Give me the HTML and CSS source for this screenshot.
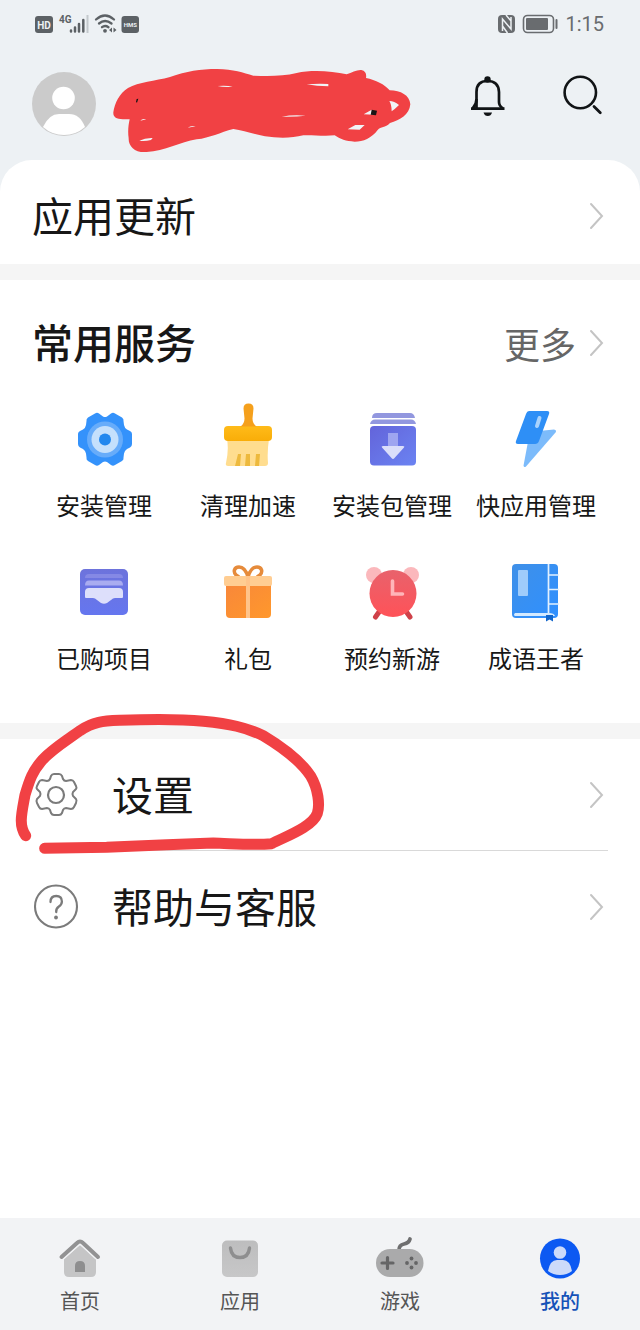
FILE: index.html
```html
<!DOCTYPE html>
<html lang="zh-CN">
<head>
<meta charset="utf-8">
<meta name="viewport" content="width=device-width, initial-scale=1">
<title>我的</title>
<link rel="stylesheet" href="styles.css">
</head>
<body>
<header class="top">
  <div class="status">
    <svg class="status-left" width="110" height="24" viewBox="32 12 110 24" aria-hidden="true">
      <rect x="35" y="16" width="18" height="17" rx="3" fill="#5c6165"/>
      <text x="44" y="28.500" text-anchor="middle" class="t-hd">HD</text>
      <text x="59" y="23" class="t-4g">4G</text>
      <path d="M71 30.500v1M75 27.500v4M79 24v7.500M83.300 20v11.500" stroke="#5c6165" stroke-width="2.500" stroke-linecap="round"/>
      <path d="M87.500 15v18" stroke="#c3c8cc" stroke-width="2"/>
      <g fill="none" stroke="#5c6165" stroke-width="2.300" stroke-linecap="round"><path d="M96 19.500q9-8 18 0M99 23.500q6-5 12.500 0M102 27.200q3-2.500 6.500 0"/></g>
      <circle cx="105" cy="30.800" r="1.900" fill="#5c6165"/>
      <path d="M112 27.500v5l-3-2.500zM113.500 27.500v5l3-2.500z" fill="#5c6165"/>
      <rect x="121.500" y="16" width="17.500" height="17" rx="3" fill="#5c6165"/>
      <text x="130.300" y="26.500" text-anchor="middle" class="t-hms">HMS</text>
    </svg>
    <div class="status-right">
      <svg width="64" height="24" viewBox="496 12 64 24" aria-hidden="true">
        <rect x="499" y="15" width="17" height="18" rx="4" fill="#696c6f"/>
        <path d="M503.500 31V19l8.500 10V17M507 15l5 6M503.500 26l5 7" fill="none" stroke="#edf1f4" stroke-width="1.500"/>
        <rect x="524.500" y="15.500" width="30" height="17" rx="4" fill="none" stroke="#696c6f" stroke-width="1.600"/>
        <rect x="527" y="18" width="22" height="12" rx="1" fill="#696c6f"/>
        <path d="M557.500 20v8" stroke="#696c6f" stroke-width="2" stroke-linecap="round"/>
      </svg>
      <time class="clock">1:15</time>
    </div>
  </div>
  <div class="profile">
    <button class="plain" aria-label="头像">
      <svg width="64" height="64" viewBox="0 0 64 64"><circle cx="32" cy="32" r="32" fill="#cbcbcb"/><circle cx="31.500" cy="26" r="11.300" fill="#fff"/><path d="M11 55Q17 42 27 42h10q11 0 16 13Q44 63 32 63T11 55z" fill="#fff"/></svg>
    </button>
    <div class="actions">
      <button class="plain" aria-label="通知">
        <svg width="48" height="48" viewBox="464 80 48 48"><path d="M476.500 108V92q0-11 11-11t11.500 11v10q0 4 4 6.500" fill="none" stroke="#111416" stroke-width="2.700"/><path d="M471 108.700h33.500M476.500 99q0 5-3.500 9" fill="none" stroke="#111416" stroke-width="2.700"/><circle cx="487.500" cy="79.500" r="3.200" fill="#111416"/><path d="M483.500 112.500h8.500q-1 3.500-4.200 3.500t-4.300-3.500z" fill="#111416"/></svg>
      </button>
      <button class="plain" aria-label="搜索">
        <svg width="48" height="48" viewBox="558 80 48 48"><circle cx="580.300" cy="92.500" r="15.700" fill="none" stroke="#111416" stroke-width="2.600"/><path d="M594 106.500l6.300 6.300" stroke="#111416" stroke-width="2.800" stroke-linecap="round"/></svg>
      </button>
    </div>
  </div>
  <svg class="scribble" width="320" height="100" viewBox="0 0 960 300" aria-hidden="true">
    <path fill="#f14144" d="M40 157C44 130 58 100 84 84C116 66 165 63 210 51C260 34 300 27 352 27C400 28 430 38 460 47C505 49 550 49 590 39C635 29 695 33 740 43C756 37 770 29 784 30C797 33 800 42 798 54C827 60 854 73 869 91C902 92 929 105 931 133C928 165 900 180 870 189C855 205 843 198 833 210C814 235 790 245 764 245C738 244 720 237 704 226C670 230 635 224 610 226C575 235 535 235 495 229C460 222 430 212 400 207C360 217 330 234 290 238C240 247 195 273 140 276C105 279 85 259 86 235C83 215 85 196 89 178C66 178 38 181 40 157Z"/>
    <path fill="#f1f3f6" d="M353 78q25-3 45 2-25 3-45-2zM620 73q35-3 65-1v7q-35 0-65-6zM118 242q18-9 40-8l-5 6q-18 4-35 2zM121 182q6-8 18-4zM263 203q10-7 24-4zM545 170q35-7 72-3-30 4-72 3zM868 123q15 0 29 12-12 12-22 19 0-20-7-31zM743 208l23-13h28l-15 14zM791 163l24-14 7 15z"/>
    <path fill="#191415" d="M815 149l16 3-3 14-16-2zM110 117l5-1-4 12-3-2z"/>
  </svg>
</header>
<main class="content">
  <section class="updates">
    <a class="row" href="#updates"><span class="title">应用更新</span><svg class="chev" width="16" height="28" viewBox="0 0 16 28"><path d="M3 2l11 12L3 26"/></svg></a>
  </section>
  <section class="services">
    <div class="heading">
      <h2 class="title strong">常用服务</h2>
      <a class="more" href="#more">更多<svg class="chev" width="16" height="28" viewBox="0 0 16 28"><path d="M3 2l11 12L3 26"/></svg></a>
    </div>
    <div class="grid">
      <a class="item" href="#install"><svg width="60" height="60" viewBox="74 409 60 60">
        <path d="M95 413.500Q97 412 99 413.500L103 416.500Q105 417.500 107 416.500L111 413.500Q113 412 115 413.500L122 417.500Q124 419 123.500 421L124 425Q124.500 428 127 429.500L130 431Q132 432 132 434V444Q132 446.500 130 447.500L127 449Q124.500 450.500 124 453.500L123.500 457.500Q124 459.500 122 461L115 465Q113 466.500 111 465L107 462Q105 461 103 462L99 465Q97 466.500 95 465L88 461Q86 459.500 86.500 457.500L86 453.500Q85.500 450.500 83 449L80 447.500Q78 446.500 78 444V434Q78 432 80 431L83 429.500Q85.500 428 86 425L86.500 421Q86 419 88 417.500Z" fill="#3492fb"/><circle cx="105" cy="439.500" r="18" fill="#67acfa"/><circle cx="105" cy="439.500" r="13.500" fill="#c5e0fc"/><circle cx="105" cy="439.500" r="6" fill="#2287ee"/></svg><span>安装管理</span></a>
      <a class="item" href="#clean"><svg width="60" height="60" viewBox="218 409 60 60">
        <defs><linearGradient id="brush" x2="0" y2="1"><stop stop-color="#ffbb19"/><stop offset="1" stop-color="#f9ad08"/></linearGradient></defs>
        <path d="M227 439h42q-2 13-1 24 0 3-3 3h-37q-3 0-2-3 3-13 1-24z" fill="#ffdd8f"/><path d="M235 466l3-12h3l-1 12zM245 466l1-12h4v12zM255 466l1-12h4l-1 12z" fill="#edb93d"/><rect x="224" y="426" width="48" height="15" rx="4" fill="url(#brush)"/><path d="M248.500 403.500q5 0 5 5l-1 10q0 5 4 8h-16q4-3 4-8l-1-10q0-5 5-5z" fill="#f5a01c"/></svg><span>清理加速</span></a>
      <a class="item" href="#packages"><svg width="60" height="60" viewBox="362 409 60 60">
        <defs><linearGradient id="box" x2="1" y2="1"><stop stop-color="#6364da"/><stop offset="1" stop-color="#6b83f2"/></linearGradient></defs>
        <path d="M372 418q0-5 5-5h33q4 0 5 5zM370 424q1-4.500 5-4.500h36q4 0 5 4.500z" fill="#9297df"/><rect x="370" y="426" width="46" height="39.500" rx="4" fill="url(#box)"/><path d="M388 433h10v13h-10z" fill="#9ea5f0"/><path d="M383 446h20q2 0 1 1.500l-9.500 10.500q-1.500 2-3 0l-9.500-10.500q-1-1.500 1-1.500z" fill="#dadefa"/></svg><span>安装包管理</span></a>
      <a class="item" href="#quick"><svg width="60" height="60" viewBox="506 409 60 60">
        <path d="M539 431l15-1.500q3 .5 1.500 3L526 466.500q-2 1.500-2.500-1l4.500-24z" fill="#7cbbfb"/><path d="M529 411h18q3 0 2 3l-10 27q-1 3-4 3h-17q-3 0-2-3l10-27q1-3 3-3z" fill="#2e8ff6"/><path d="M539.500 418l-2.500 8" stroke="#a9d3fd" stroke-width="4" stroke-linecap="round"/></svg><span>快应用管理</span></a>
      <a class="item" href="#purchased"><svg width="60" height="60" viewBox="74 562 60 60">
        <defs><linearGradient id="tray" x2="0" y2="1"><stop stop-color="#6d73dc"/><stop offset="1" stop-color="#6576ef"/></linearGradient></defs>
        <rect x="80" y="569" width="48" height="46" rx="5" fill="url(#tray)"/><path d="M85 578q0-4 4-4h30q4 0 4 4z" fill="#8589e5"/><path d="M85 585.500q0-5 4-5h30q4 0 4 5z" fill="#a9acf0"/><path d="M85 597v-5q0-4 4-4h30q4 0 4 4v5q0 1-1 1h-7q-2 0-4 2l-4 3q-3 1.500-6 0l-4-3q-2-2-4-2h-7q-1 0-1-1z" fill="#dddffb"/></svg><span>已购项目</span></a>
      <a class="item" href="#gifts"><svg width="60" height="60" viewBox="218 562 60 60">
        <defs><linearGradient id="gift" x2="1" y2="1"><stop stop-color="#f8873a"/><stop offset="1" stop-color="#ff982c"/></linearGradient></defs>
        <path d="M248 577c-2-7-5-10-9-10-5 0-6 5-3 8l3 2M248 577c2-7 5-10 9-10 5 0 6 5 3 8l-3 2" fill="none" stroke="#e68b3b" stroke-width="3.500"/><path d="M226 583h45v31q0 4-4 4h-37q-4 0-4-4z" fill="url(#gift)"/><rect x="224" y="576" width="48" height="10" rx="2" fill="#ffcd92"/><path d="M246 576h4v42h-4z" fill="#ffc48a"/></svg><span>礼包</span></a>
      <a class="item" href="#reserve"><svg width="60" height="60" viewBox="362 562 60 60">
        <defs><linearGradient id="alarm" x2="0" y2="1"><stop stop-color="#e8626c"/><stop offset="1" stop-color="#ff5258"/></linearGradient></defs>
        <circle cx="374" cy="575" r="8" fill="#fbb8bc"/><circle cx="411" cy="575" r="8" fill="#fbb8bc"/><path d="M379 612l-3.500 5M406.500 612l3.500 5" stroke="#cf4149" stroke-width="5" stroke-linecap="round"/><circle cx="393" cy="593.500" r="23.500" fill="url(#alarm)"/><path d="M392.500 581v13h10" fill="none" stroke="#ffb5b9" stroke-width="3.600" stroke-linecap="round"/></svg><span>预约新游</span></a>
      <a class="item" href="#idioms"><svg width="60" height="60" viewBox="506 562 60 60">
        <defs><linearGradient id="book" x2="1" y2="1"><stop stop-color="#3f90e8"/><stop offset="1" stop-color="#2f90ff"/></linearGradient></defs>
        <rect x="512" y="564" width="46" height="54" rx="4" fill="url(#book)"/><path d="M548.500 564v50M549 575h10M549 589.500h10M549 604h10" stroke="#e2f1ff" stroke-width="1.700"/><rect x="518" y="570" width="10" height="26" rx="1" fill="#9fccfb"/><path d="M515 613h34q5 0 6 3h-40q-2-1 0-3z" fill="#d4eaff"/><path d="M546 615h7v6.500l-3.500-2-3.500 2z" fill="#1266cb"/></svg><span>成语王者</span></a>
    </div>
  </section>
  <section class="menu">
    <a class="row" href="#settings">
      <svg class="lead" width="48" height="48" viewBox="32 771 48 48"><path d="M51 776q1-2 3-2h5q2 0 3 2l1 3q1 2 3 2l5-1q2 0 3 2l2 4q1 2 0 3l-3 3q-1 2 0 4l3 3q1 1 0 4l-2 4q-1 2-3 2l-5-1q-2 0-3 2l-1 3q-1 2-3 2h-5q-2 0-3-2l-1-3q-1-2-3-2l-5 1q-2 0-3-2l-2-4q-1-2 0-4l3-3q1-2 0-4l-3-3q-1-1 0-3l2-4q1-2 3-2l5 1q2 0 3-2z" fill="none" stroke="#7b7b7b" stroke-width="2"/><circle cx="56" cy="795" r="8" fill="none" stroke="#7b7b7b" stroke-width="2.200"/></svg>
      <span class="title">设置</span><svg class="chev" width="16" height="28" viewBox="0 0 16 28"><path d="M3 2l11 12L3 26"/></svg>
    </a>
    <a class="row" href="#help">
      <svg class="lead" width="48" height="48" viewBox="32 883 48 48"><circle cx="56" cy="906.500" r="21" fill="none" stroke="#7b7b7b" stroke-width="2.100"/><path d="M50.500 902q0-6 5.700-6t5.700 5.500q0 3-3 5t-2.700 5.500" fill="none" stroke="#7b7b7b" stroke-width="2.300" stroke-linecap="round"/><circle cx="56" cy="917.500" r="1.900" fill="#7b7b7b"/></svg>
      <span class="title">帮助与客服</span><svg class="chev" width="16" height="28" viewBox="0 0 16 28"><path d="M3 2l11 12L3 26"/></svg>
    </a>
    <svg class="ring" width="340" height="180" viewBox="0 0 1020 540" aria-hidden="true"><path d="M77 407C55 375 65 340 75 285C90 235 98 215 122 186C150 151 205 118 240 92C280 64 310 63 360 61C440 58 540 57 610 64C690 72 735 81 790 107C850 143 900 180 932 228C955 267 960 315 952 340C938 380 860 408 815 431C760 437 690 430 640 429L500 434L320 442L134 445" fill="none" stroke="#f14144" stroke-width="33" stroke-linecap="round" stroke-linejoin="round"/></svg>
  </section>
</main>
<nav class="tabs">
  <a class="tab" href="#home"><svg width="48" height="44" viewBox="56 1236 48 44"><path d="M64 1259l16-14 16 14v13q0 5-5 5H69q-5 0-5-5z" fill="#c5c5c6"/><path d="M61.500 1257l15.500-14q3-3 6 0l15 14" fill="none" stroke="#f2f3f5" stroke-width="7"/><path d="M61.500 1257l15.500-14q3-3 6 0l15 14" fill="none" stroke="#929293" stroke-width="4" stroke-linecap="round"/><path d="M75 1272v-6q0-5 5-5t5 5v6z" fill="#8e8e8f"/></svg><span>首页</span></a>
  <a class="tab" href="#apps"><svg width="48" height="44" viewBox="216 1236 48 44"><defs><linearGradient id="bag" x2="0" y2="1"><stop stop-color="#bdbdbe"/><stop offset="1" stop-color="#c7c7c8"/></linearGradient></defs><rect x="222" y="1240.500" width="36" height="36.500" rx="5" fill="url(#bag)"/><path d="M230.500 1248q1 9.500 9.500 9.500t9.500-9.500" fill="none" stroke="#8e8e8f" stroke-width="3.400" stroke-linecap="round"/></svg><span>应用</span></a>
  <a class="tab" href="#games"><svg width="52" height="44" viewBox="374 1236 52 44"><path d="M399 1250q0-5 5-6t6-5" fill="none" stroke="#6f6f70" stroke-width="3.700" stroke-linecap="round"/><rect x="376" y="1249" width="47.500" height="28" rx="14" fill="#aaaaab"/><path d="M382 1263h11M387.500 1257.500v11" stroke="#656566" stroke-width="3.200" stroke-linecap="round"/><g fill="#656566"><circle cx="411.500" cy="1258.500" r="1.900"/><circle cx="411.500" cy="1267.500" r="1.900"/><circle cx="407" cy="1263" r="1.900"/><circle cx="416" cy="1263" r="1.900"/></g></svg><span>游戏</span></a>
  <a class="tab current" href="#me" aria-current="page"><svg width="48" height="44" viewBox="536 1236 48 44"><circle cx="560" cy="1258.500" r="20" fill="#0c59f2"/><circle cx="560" cy="1252.500" r="6.300" fill="#ccdafa"/><path d="M548 1271q2-11 9-11h6q7 0 9 11-5 4-12 4t-12-4z" fill="#ccdafa"/></svg><span>我的</span></a>
</nav>
</body>
</html>
```
FILE: styles.css
```css
* { box-sizing: border-box; }
body {
  margin: 0;
  min-height: 100vh;
  display: flex;
  flex-direction: column;
  background: #edf1f4;
  color: #171717;
  font-family: "Noto Sans CJK SC", sans-serif;
}
a { color: inherit; text-decoration: none; }
svg { display: block; flex: none; overflow: visible; }
.plain { border: 0; padding: 0; background: none; cursor: pointer; }

.top { position: relative; }
.status {
  display: flex;
  justify-content: space-between;
  align-items: center;
  height: 48px;
  padding: 0 36px 0 32px;
}
.status-right { display: flex; align-items: center; gap: 6px; }
.clock { font: 20px/24px Roboto, sans-serif; color: #696c6f; }
.t-hd { font: bold 10px Roboto, sans-serif; fill: #edf1f4; }
.t-4g { font: bold 10px Roboto, sans-serif; fill: #5c6165; }
.t-hms { font: bold 6px Roboto, sans-serif; fill: #edf1f4; }
.profile {
  display: flex;
  justify-content: space-between;
  align-items: center;
  height: 112px;
  padding: 0 34px 0 32px;
}
.actions { display: flex; gap: 46px; }
.scribble { position: absolute; left: 100px; top: 60px; }

.content {
  flex: 1;
  background: #fff;
  border-radius: 32px 32px 0 0;
}
.title {
  margin: 0;
  padding-bottom: 4px;
  font-size: 41px;
  line-height: 56px;
  font-weight: 400;
}
.strong { font-weight: 500; }
.chev { margin-left: auto; }
.chev path { fill: none; stroke: #c4c4c4; stroke-width: 2; stroke-linecap: round; }
.row { display: flex; align-items: center; height: 112px; padding: 0 36px 0 32px; }
.updates { border-bottom: 16px solid #f5f5f5; }
.updates .row { height: 104px; padding-top: 8px; }
.services { padding: 33px 32px 45px; border-bottom: 16px solid #f5f5f5; }
.heading { display: flex; justify-content: space-between; align-items: center; padding-right: 4px; }
.more { display: flex; align-items: center; gap: 12px; font-size: 36px; line-height: 60px; color: #666; }
.grid { display: grid; grid-template-columns: repeat(4, 1fr); row-gap: 37px; margin-top: 36px; }
.item {
  display: flex;
  flex-direction: column;
  align-items: center;
  gap: 16px;
  font-size: 24px;
  line-height: 40px;
  white-space: nowrap;
}
.menu { position: relative; }
.menu .row { position: relative; }
.menu .row:first-child::after {
  content: "";
  position: absolute;
  left: 112px;
  right: 32px;
  bottom: 0;
  height: 1px;
  background: #d9d9d9;
}
.lead { margin-right: 32px; }
.ring { position: absolute; left: 0; top: -39px; pointer-events: none; }

.tabs {
  display: grid;
  grid-template-columns: repeat(4, 1fr);
  height: 112px;
  padding-top: 18px;
  background: #f2f3f5;
}
.tab {
  display: flex;
  flex-direction: column;
  align-items: center;
  gap: 6px;
  font-size: 20px;
  line-height: 30px;
  color: #555;
}
.current { color: #1552b8; font-weight: 500; }
```
